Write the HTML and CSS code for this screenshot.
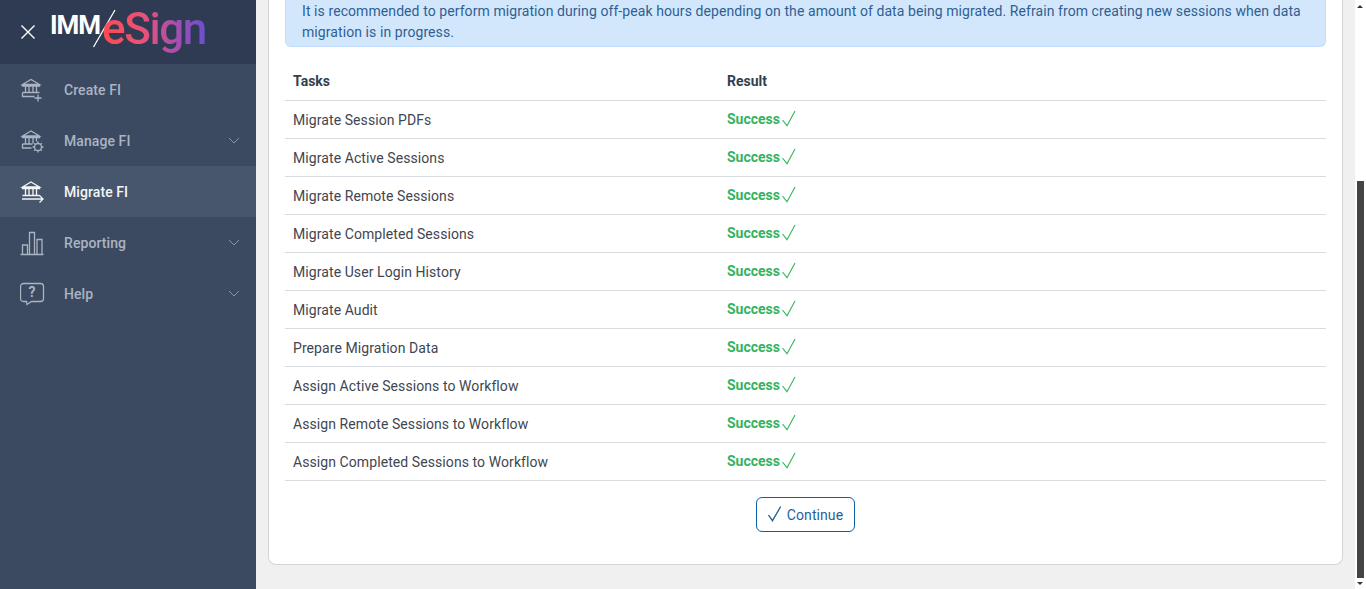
FILE: index.html
```html
<!DOCTYPE html>
<html lang="en">
<head>
<meta charset="utf-8">
<title>Migrate FI</title>
<link rel="stylesheet" href="styles.css">
</head>
<body>
<aside class="sidebar">
  <header class="brand">
    <svg class="close" width="16" height="16" viewBox="0 0 16 16"><path d="M1.500 1.500l13 13M14.500 1.500l-13 13"/></svg>
    <div class="logo">
      <span class="imm">IMM</span>
      <svg class="slash" width="24" height="40" viewBox="0 0 24 40"><path d="M1.500 38L23 1"/></svg>
      <span class="esign">eSign</span>
    </div>
  </header>
  <nav class="nav">
    <a class="nav-item">
      <svg class="nav-icon" width="26" height="28" viewBox="0 0 26 28"><path d="M2.500 8.500L11 3.500l8.500 5zM2.500 8.500v1.500h17V8.500M5.500 10v6M9 10v6M13 10v6M16.500 10v6M2.500 16.500h17M2.500 16.500v4h12M18 18.500v7M14.500 22h7"/></svg>
      <span class="nav-label">Create FI</span>
    </a>
    <a class="nav-item">
      <svg class="nav-icon" width="26" height="28" viewBox="0 0 26 28"><path d="M2.500 9L11 4l8.500 5zM2.500 9v1.500h17V9M5.500 10.500v6M9 10.500v6M13 10.500v6M16.500 10.500v4M2.500 17h10M2.500 17v4h9"/><circle cx="18" cy="20" r="3.500"/><path d="M18 14.500v2M18 23.500v2M12.500 20h2M21.500 20h2M14.200 16.200l1.300 1.300M20.500 22.500l1.300 1.300M21.800 16.200l-1.300 1.300M15.500 22.500l-1.300 1.300"/></svg>
      <span class="nav-label">Manage FI</span>
      <svg class="chevron" width="12" height="7" viewBox="0 0 12 7"><path d="M1 1l5 5 5-5"/></svg>
    </a>
    <a class="nav-item active">
      <svg class="nav-icon" width="26" height="28" viewBox="0 0 26 28"><path d="M2.500 9L11 4l8.500 5zM2.500 9v1.500h17V9M5.500 10.500v6.500M9 10.500v6.500M13 10.500v6.500M16.500 10.500v6.500M2.500 17.500h17M2 21h21M19.500 17.500L23 21l-3.500 3.500"/></svg>
      <span class="nav-label">Migrate FI</span>
    </a>
    <a class="nav-item">
      <svg class="nav-icon" width="26" height="28" viewBox="0 0 26 28"><path d="M0.500 25.500h23M2.500 25V16h5v9M9.500 25V3.500h5V25M17 25V10.500h5V25"/></svg>
      <span class="nav-label">Reporting</span>
      <svg class="chevron" width="12" height="7" viewBox="0 0 12 7"><path d="M1 1l5 5 5-5"/></svg>
    </a>
    <a class="nav-item">
      <svg class="nav-icon" width="26" height="28" viewBox="0 0 26 28"><path d="M3.500 3.500h17a3 3 0 0 1 3 3v12a3 3 0 0 1-3 3H11.500l-4.500 3L6.500 21.500h-3a3 3 0 0 1-3-3v-12a3 3 0 0 1 3-3z"/><text class="help-mark" x="12" y="17">?</text></svg>
      <span class="nav-label">Help</span>
      <svg class="chevron" width="12" height="7" viewBox="0 0 12 7"><path d="M1 1l5 5 5-5"/></svg>
    </a>
  </nav>
</aside>
<main class="main">
  <section class="card">
    <p class="alert">It is recommended to perform migration during off-peak hours depending on the amount of data being migrated. Refrain from creating new sessions when data migration is in progress.</p>
    <table class="tasks">
      <thead>
        <tr><th class="col-task">Tasks</th><th>Result</th></tr>
      </thead>
      <tbody>
        <tr><td>Migrate Session PDFs</td><td><span class="ok">Success<svg class="tick" width="16" height="18" viewBox="0 0 16 18"><path d="M1.500 10L6 15.700 14 1"/></svg></span></td></tr>
        <tr><td>Migrate Active Sessions</td><td><span class="ok">Success<svg class="tick" width="16" height="18" viewBox="0 0 16 18"><path d="M1.500 10L6 15.700 14 1"/></svg></span></td></tr>
        <tr><td>Migrate Remote Sessions</td><td><span class="ok">Success<svg class="tick" width="16" height="18" viewBox="0 0 16 18"><path d="M1.500 10L6 15.700 14 1"/></svg></span></td></tr>
        <tr><td>Migrate Completed Sessions</td><td><span class="ok">Success<svg class="tick" width="16" height="18" viewBox="0 0 16 18"><path d="M1.500 10L6 15.700 14 1"/></svg></span></td></tr>
        <tr><td>Migrate User Login History</td><td><span class="ok">Success<svg class="tick" width="16" height="18" viewBox="0 0 16 18"><path d="M1.500 10L6 15.700 14 1"/></svg></span></td></tr>
        <tr><td>Migrate Audit</td><td><span class="ok">Success<svg class="tick" width="16" height="18" viewBox="0 0 16 18"><path d="M1.500 10L6 15.700 14 1"/></svg></span></td></tr>
        <tr><td>Prepare Migration Data</td><td><span class="ok">Success<svg class="tick" width="16" height="18" viewBox="0 0 16 18"><path d="M1.500 10L6 15.700 14 1"/></svg></span></td></tr>
        <tr><td>Assign Active Sessions to Workflow</td><td><span class="ok">Success<svg class="tick" width="16" height="18" viewBox="0 0 16 18"><path d="M1.500 10L6 15.700 14 1"/></svg></span></td></tr>
        <tr><td>Assign Remote Sessions to Workflow</td><td><span class="ok">Success<svg class="tick" width="16" height="18" viewBox="0 0 16 18"><path d="M1.500 10L6 15.700 14 1"/></svg></span></td></tr>
        <tr><td>Assign Completed Sessions to Workflow</td><td><span class="ok">Success<svg class="tick" width="16" height="18" viewBox="0 0 16 18"><path d="M1.500 10L6 15.700 14 1"/></svg></span></td></tr>
      </tbody>
    </table>
    <div class="actions">
      <button class="btn" type="button"><svg class="btn-tick" width="14" height="16" viewBox="0 0 14 16"><path d="M0.500 9L4.500 14.700 12.700 0.500"/></svg><span class="btn-label">Continue</span></button>
    </div>
  </section>
</main>
<div class="scrollbar">
  <span class="arrow up"></span>
  <span class="thumb"></span>
  <span class="arrow down"></span>
</div>
</body>
</html>
```
FILE: styles.css
```css
* { box-sizing: border-box; }
html, body { margin: 0; height: 589px; overflow: hidden; }
body {
  display: flex;
  font-family: Roboto, "Liberation Sans", sans-serif;
  font-size: 14px;
  letter-spacing: 0.08px;
  color: #3f4650;
  background: #f0f0f0;
}
.sidebar {
  width: 256px;
  flex: none;
  background: #3b4a60;
  display: flex;
  flex-direction: column;
}
.brand {
  height: 64px;
  background: #2f3b52;
  display: flex;
  align-items: center;
  padding-left: 20px;
}
.close { fill: none; stroke: #fff; stroke-width: 1.4; }
.logo {
  margin-left: 15px;
  display: flex;
  align-items: flex-start;
  height: 64px;
  position: relative;
  width: 170px;
}
.imm {
  position: absolute;
  left: -1px;
  top: 9px;
  font-size: 26px;
  line-height: 32px;
  font-weight: 700;
  color: #fff;
  letter-spacing: -1px;
}
.slash {
  position: absolute;
  left: 41px;
  top: 9px;
  fill: none;
  stroke: #fff;
  stroke-width: 1.3;
}
.esign {
  position: absolute;
  left: 51px;
  top: 5px;
  font-size: 44px;
  line-height: 48px;
  font-weight: 500;
  letter-spacing: -1.4px;
  background: linear-gradient(90deg, #ff4a4f 0%, #e8527a 40%, #a24fb0 72%, #6b4fd0 100%);
  -webkit-background-clip: text;
  background-clip: text;
  color: transparent;
}
.nav { display: flex; flex-direction: column; }
.nav-item {
  height: 51px;
  display: flex;
  align-items: center;
  padding: 0 16px 0 20px;
  color: #aab4c3;
  font-weight: 500;
}
.nav-item.active { background: #47566c; color: #f4f6f8; }
.nav-icon {
  flex: none;
  fill: none;
  stroke: #aab4c3;
  stroke-width: 1.3;
  margin-right: 18px;
}
.active .nav-icon { stroke: #f4f6f8; }
.help-mark {
  fill: #aab4c3;
  stroke: none;
  font-size: 14px;
  font-weight: 700;
  text-anchor: middle;
}
.nav-label { flex: 1; }
.chevron { fill: none; stroke: #8b97a8; stroke-width: 1; }
.main {
  flex: 1;
  min-width: 0;
  padding: 0 12px;
}
.card {
  height: 565px;
  background: #fff;
  border: 1px solid #d2d4d8;
  border-top: 0;
  border-radius: 0 0 8px 8px;
  padding: 0 16px;
}
.alert {
  margin: 0;
  height: 47px;
  padding: 0 16px 3px;
  display: flex;
  align-items: flex-end;
  background: #d3e7fc;
  border: 1px solid #c0dcfa;
  border-top: 0;
  border-radius: 0 0 6px 6px;
  color: #2f5f92;
  line-height: 21px;
}
.tasks {
  width: 100%;
  margin-top: 15px;
  border-collapse: collapse;
  table-layout: fixed;
}
.tasks th, .tasks td {
  height: 38px;
  padding: 0 8px;
  text-align: left;
  border-bottom: 1px solid #d8dbe0;
}
.tasks td:first-child { padding-top: 2px; }
.tasks th { font-weight: 700; color: #343f4f; letter-spacing: 0; }
.col-task { width: 434px; }
.ok {
  display: inline-flex;
  align-items: center;
  font-weight: 700;
  color: #34b35f;
  gap: 1px;
  letter-spacing: 0;
}
.tick { fill: none; stroke: #34b35f; stroke-width: 1.1; }
.actions { display: flex; justify-content: center; margin-top: 16px; }
.btn {
  height: 35px;
  width: 99px;
  display: flex;
  align-items: center;
  justify-content: center;
  gap: 5px;
  padding: 0;
  background: #fff;
  border: 1px solid #0a5fa5;
  border-radius: 6px;
  color: #1f5f9e;
  font: 14px Roboto, "Liberation Sans", sans-serif;
  letter-spacing: 0.08px;
}
.btn-label { padding-top: 2px; }
.btn-tick { fill: none; stroke: #1f5f9e; stroke-width: 1.3; }
.scrollbar {
  width: 11px;
  flex: none;
  background: #fff;
  display: flex;
  flex-direction: column;
  align-items: flex-start;
  padding: 5px 2px 4px;
  justify-content: space-between;
}
.thumb { width: 7px; height: 397px; background: #444; margin-top: 169px; }
.arrow { width: 0; height: 0; border-left: 3px solid transparent; border-right: 3px solid transparent; }
.arrow.up { border-bottom: 3px solid #333; }
.arrow.down { border-top: 3px solid #333; }
```
